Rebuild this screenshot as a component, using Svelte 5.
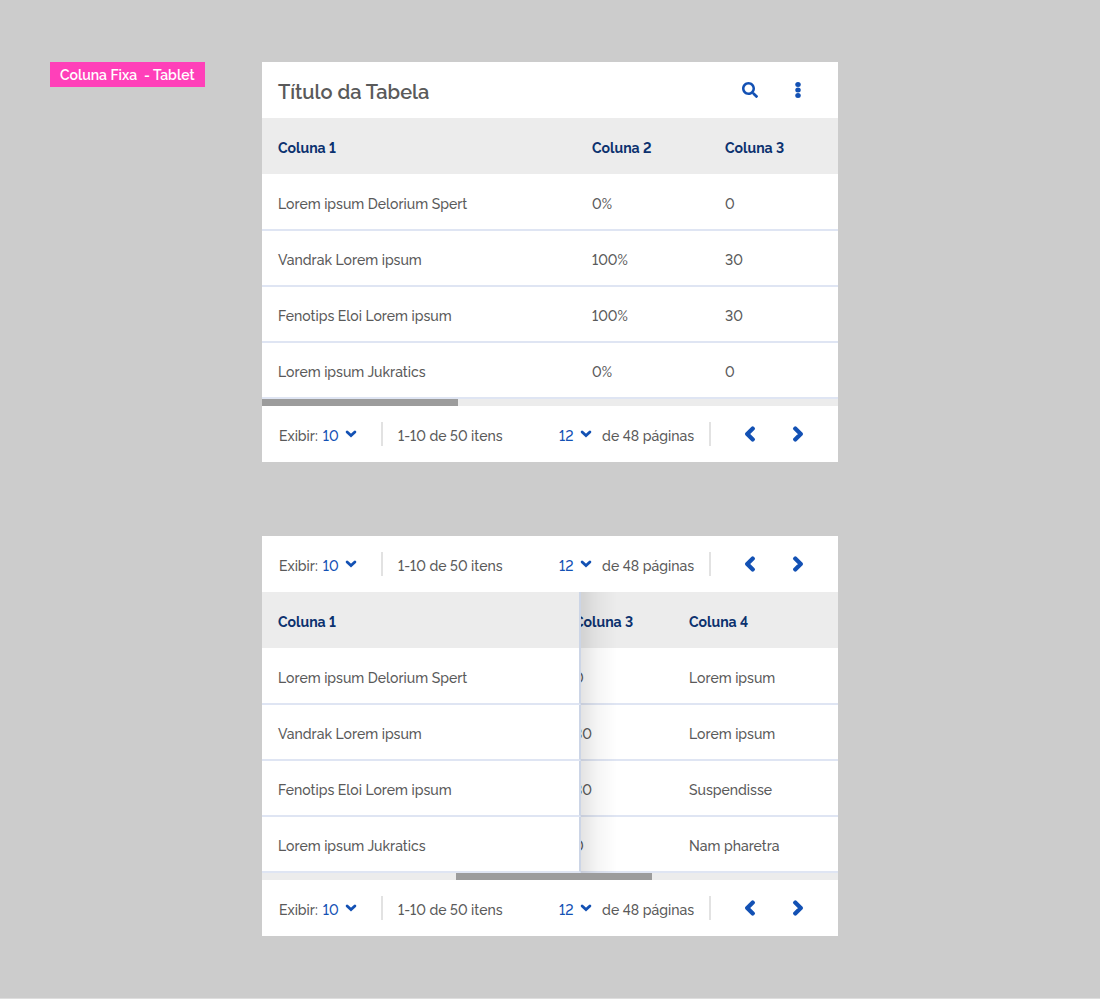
<script>
  const firstView = {
    columns: ['Coluna 1', 'Coluna 2', 'Coluna 3'],
    rows: [
      ['Lorem ipsum Delorium Spert', '0%', '0'],
      ['Vandrak Lorem ipsum', '100%', '30'],
      ['Fenotips Eloi Lorem ipsum', '100%', '30'],
      ['Lorem ipsum Jukratics', '0%', '0']
    ]
  };
  const pinnedView = {
    columns: ['Coluna 1', 'Coluna 3', 'Coluna 4'],
    rows: [
      ['Lorem ipsum Delorium Spert', '0', 'Lorem ipsum'],
      ['Vandrak Lorem ipsum', '30', 'Lorem ipsum'],
      ['Fenotips Eloi Lorem ipsum', '30', 'Suspendisse'],
      ['Lorem ipsum Jukratics', '0', 'Nam pharetra']
    ]
  };

  function scrolled(node, toEnd) {
    node.scrollLeft = toEnd ? node.scrollWidth - node.clientWidth : 0;
  }
</script>

{#snippet chevron()}
  <svg class="chevron" viewBox="0 0 12 8" aria-hidden="true">
    <path d="M2.100 2 6 5.600 9.900 2" fill="none" stroke="currentColor" stroke-width="2.800" stroke-linecap="round" />
  </svg>
{/snippet}

{#snippet pagination()}
  <nav class="pagination" aria-label="Paginação">
    <label class="size">
      <span class="show">Exibir:</span>
      <span class="picker"><select><option>10</option></select>{@render chevron()}</span>
    </label>
    <span class="divider"></span>
    <span class="range">1-10 de 50 itens</span>
    <label class="pages">
      <span class="picker"><select><option>12</option></select>{@render chevron()}</span>
      <span class="total">de 48 páginas</span>
    </label>
    <span class="divider"></span>
    <div class="steps">
      <button class="icon arrow" aria-label="Página anterior">
        <svg viewBox="0 0 320 512" aria-hidden="true"><path d="M34.500 239 228.900 44.700c9.400-9.400 24.600-9.400 33.900 0l22.700 22.700c9.400 9.400 9.400 24.500 0 33.900L131.500 256l154 154.800c9.300 9.400 9.300 24.500 0 33.900l-22.700 22.700c-9.400 9.400-24.600 9.400-33.900 0L34.500 273c-9.400-9.400-9.400-24.600 0-34z" /></svg>
      </button>
      <button class="icon arrow" aria-label="Próxima página">
        <svg viewBox="0 0 320 512" aria-hidden="true"><path d="M285.500 273 91.100 467.300c-9.400 9.400-24.600 9.400-33.900 0l-22.700-22.700c-9.400-9.400-9.400-24.500 0-33.900L188.500 256l-154-154.800c-9.300-9.400-9.300-24.500 0-33.900l22.700-22.700c9.400-9.400 24.600-9.400 33.900 0L285.500 239c9.400 9.400 9.400 24.600 0 34z" /></svg>
      </button>
    </div>
  </nav>
{/snippet}

{#snippet dataTable(view, pinned)}
  <div class="viewport" use:scrolled={pinned}>
    <table class:pinned>
      <colgroup>
        <col class="first" /><col class="second" /><col />
      </colgroup>
      <thead>
        <tr>
          {#each view.columns as column}<th scope="col">{column}</th>{/each}
        </tr>
      </thead>
      <tbody>
        {#each view.rows as row}
          <tr>
            {#each row as cell}<td>{cell}</td>{/each}
          </tr>
        {/each}
      </tbody>
    </table>
  </div>
  <div class="track" class:middle={pinned}><div class="thumb"></div></div>
{/snippet}

<main>
  <div><span class="tag">Coluna Fixa&nbsp; - Tablet</span></div>
  <div class="examples">
    <section class="card">
      <header>
        <h1>Título da Tabela</h1>
        <button class="icon" aria-label="Pesquisar">
          <svg viewBox="0 0 512 512" aria-hidden="true"><path fill="currentColor" d="M505 442.700 405.300 343c-4.500-4.500-10.600-7-17-7H372c27.600-35.300 44-79.700 44-128C416 93.100 322.900 0 208 0S0 93.100 0 208s93.100 208 208 208c48.300 0 92.700-16.400 128-44v16.300c0 6.400 2.500 12.500 7 17l99.700 99.700c9.400 9.400 24.600 9.400 33.900 0l28.300-28.300c9.400-9.400 9.400-24.600.1-34zM208 336c-70.700 0-128-57.200-128-128 0-70.700 57.200-128 128-128 70.700 0 128 57.200 128 128 0 70.700-57.200 128-128 128z" /></svg>
        </button>
        <button class="icon" aria-label="Mais opções">
          <svg viewBox="0 0 192 512" aria-hidden="true" fill="currentColor"><ellipse cx="96" cy="80" rx="88" ry="80" /><ellipse cx="96" cy="256" rx="88" ry="80" /><ellipse cx="96" cy="432" rx="88" ry="80" /></svg>
        </button>
      </header>
      {@render dataTable(firstView, false)}
      {@render pagination()}
    </section>
    <section class="card">
      {@render pagination()}
      {@render dataTable(pinnedView, true)}
      {@render pagination()}
    </section>
  </div>
</main>

<style>
  :global(body) {
    margin: 0;
    background: #ccc;
  }
  main {
    box-sizing: border-box;
    min-height: 100vh;
    display: grid;
    grid-template-columns: 212px minmax(0, 1fr) 212px;
    padding: 62px 50px;
    border-bottom: 1px solid #dedede;
    background: #ccc;
    color: #5a5a5a;
    font: 500 14px/20px Raleway, Lato, sans-serif;
    font-variant-numeric: lining-nums;
  }
  .tag {
    display: inline-block;
    padding: 2px 10px 0;
    background: #ff40b9;
    color: #fff;
    font-weight: 600;
    line-height: 23px;
    white-space: nowrap;
  }
  .examples {
    display: grid;
    align-content: start;
    gap: 74px;
  }
  .card {
    min-width: 0;
    background: #fff;
  }
  header {
    display: flex;
    align-items: center;
    height: 56px;
    padding: 0 16px;
  }
  h1 {
    flex: 1;
    margin: 0;
    padding-top: 4px;
    font-size: 20px;
    line-height: 28px;
    font-weight: 600;
  }
  button {
    padding: 0;
    border: 0;
    background: none;
    color: #1351b4;
  }
  .icon {
    display: grid;
    place-items: center;
    width: 48px;
    height: 48px;
  }
  .icon svg {
    width: 16px;
    height: 16px;
  }
  .arrow path {
    fill: currentColor;
    stroke: currentColor;
    stroke-width: 56;
    stroke-linejoin: round;
  }
  .viewport {
    overflow-x: auto;
    scrollbar-width: none;
  }
  table {
    table-layout: fixed;
    width: 100%;
    border-spacing: 0;
  }
  .pinned {
    width: calc(100% + 23px);
  }
  .first {
    width: 314px;
  }
  .second {
    width: 133px;
  }
  .pinned .first {
    width: 319px;
  }
  .pinned .second {
    width: 115px;
  }
  th,
  td {
    box-sizing: border-box;
    height: 56px;
    padding: 0 16px 15px;
    text-align: left;
    vertical-align: bottom;
    white-space: nowrap;
    background: #fff;
    border-bottom: 2px solid #dfe5f3;
  }
  th {
    padding-bottom: 16px;
    border-bottom: 0;
    background: #ececec;
    color: #0c326f;
    font-weight: 700;
  }
  tbody tr:first-child td {
    height: 57px;
  }
  .pinned :is(th, td):first-child {
    position: sticky;
    left: 0;
    z-index: 1;
    border-right: 2px solid #ccd5e6;
  }
  .pinned :is(th, td):first-child::after {
    content: '';
    position: absolute;
    top: 0;
    bottom: -2px;
    left: calc(100% + 2px);
    width: 36px;
    background: linear-gradient(90deg, rgba(0, 0, 0, 0.11), rgba(0, 0, 0, 0.04) 45%, transparent);
  }
  .pinned th:first-child::after {
    bottom: 0;
  }
  .track {
    height: 7px;
    background: #ececec;
  }
  .thumb {
    width: 34%;
    height: 100%;
    background: #9c9c9c;
  }
  .middle .thumb {
    margin-left: calc(34% - 2px);
  }
  .pagination {
    display: flex;
    align-items: center;
    height: 56px;
    padding: 0 16px 0 17px;
  }
  .size,
  .pages {
    display: flex;
    align-items: center;
    white-space: nowrap;
  }
  .show,
  .range,
  .total,
  select {
    padding: 4px 0 0;
  }
  .size {
    width: 102px;
    gap: 5px;
  }
  .picker {
    display: flex;
    align-items: center;
    gap: 6px;
    color: #1351b4;
  }
  select {
    appearance: none;
    border: 0;
    background: none;
    color: inherit;
    font: inherit;
    font-variant-numeric: inherit;
  }
  .chevron {
    width: 12px;
    height: 8px;
  }
  .divider {
    width: 2px;
    height: 24px;
    background: #e2e2e2;
  }
  .range {
    padding-left: 15px;
    white-space: nowrap;
  }
  .pages {
    gap: 10px;
    margin-left: auto;
    padding-right: 15px;
  }
  .steps {
    display: flex;
    padding-left: 15px;
  }
</style>
